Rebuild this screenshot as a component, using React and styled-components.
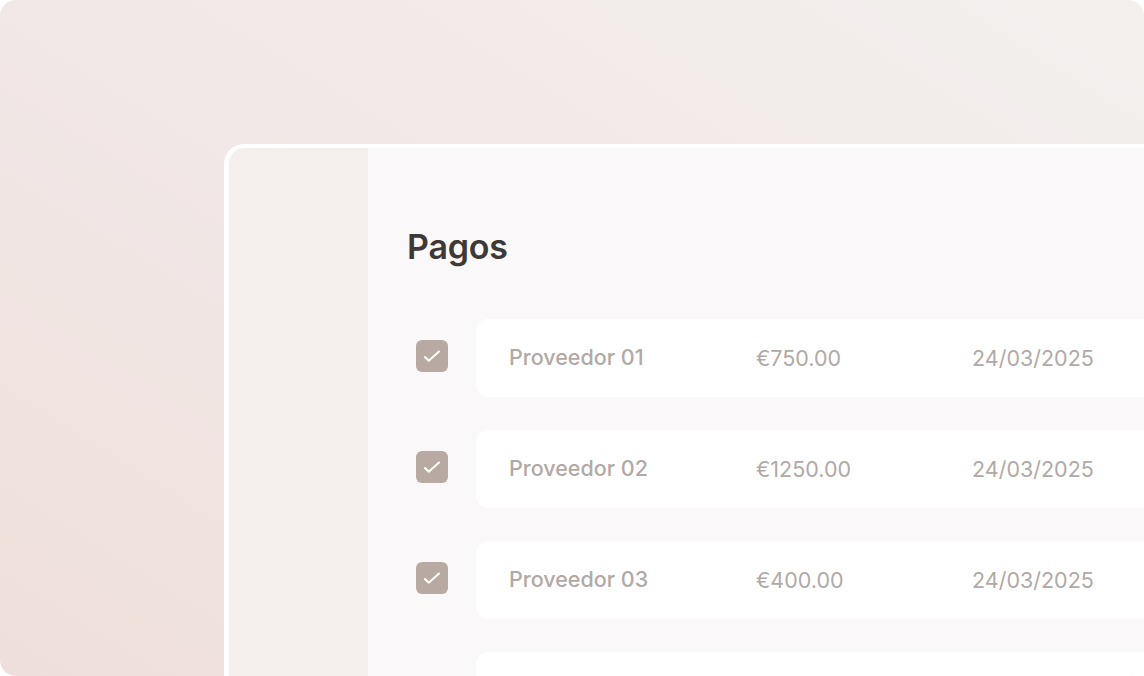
import React from 'react'
import styled, { createGlobalStyle } from 'styled-components'

const payments = [
  { name: 'Proveedor 01', amount: '€750.00', date: '24/03/2025' },
  { name: 'Proveedor 02', amount: '€1250.00', date: '24/03/2025' },
  { name: 'Proveedor 03', amount: '€400.00', date: '24/03/2025' },
  { name: '', amount: '', date: '' },
]

const Check = () => (
  <svg width="32" height="32" viewBox="0 0 32 32" fill="none">
    <path d="M9 17 12.8 20.8 23 11.5" stroke="#fff" strokeWidth="2" strokeLinecap="round" strokeLinejoin="round" />
  </svg>
)

const App = () => {
  return (
    <>
      <GlobalStyle />
      <Frame>
        <Window>
          <Sidebar />
          <Main>
            <Title>Pagos</Title>
            <List>
              {payments.map((p, i) => (
                <Row key={i}>
                  <Checkbox $hidden={!p.name}>{p.name && <Check />}</Checkbox>
                  <Card>
                    <Name>{p.name}</Name>
                    <Amount>{p.amount}</Amount>
                    <DateCell>{p.date}</DateCell>
                  </Card>
                </Row>
              ))}
            </List>
          </Main>
        </Window>
      </Frame>
    </>
  )
}

const GlobalStyle = createGlobalStyle`
  html, body {
    margin: 0;
    padding: 0;
    background: #ffffff;
    font-family: Inter, 'Noto Sans', sans-serif;
  }
`

const Frame = styled.div`
  width: 1144px;
  height: 676px;
  border-radius: 16px;
  overflow: hidden;
  box-sizing: border-box;
  padding: 144px 0 0 224px;
  background: linear-gradient(32deg, #efdfda 0%, #f1e7e6 45%, #f3f0ee 100%);
`

const Window = styled.div`
  display: flex;
  width: 1000px;
  height: 620px;
  border: 5px solid #ffffff;
  border-width: 4px 0 0 5px;
  border-radius: 20px 0 0 0;
  overflow: hidden;
  background: #faf8f8;
`

const Sidebar = styled.div`
  width: 139px;
  flex-shrink: 0;
  background: #f4efec;
`

const Main = styled.div`
  flex: 1;
  padding: 79px 0 0 39px;
`

const Title = styled.h1`
  margin: 0;
  font-size: 34px;
  line-height: 40px;
  font-weight: 600;
  color: #3e3936;
  letter-spacing: -0.2px;
`

const List = styled.div`
  display: flex;
  flex-direction: column;
  gap: 33px;
  margin-top: 52px;
  padding-left: 9px;
`

const Row = styled.div`
  display: flex;
  align-items: center;
  gap: 28px;
`

const Checkbox = styled.div`
  width: 32px;
  height: 32px;
  flex-shrink: 0;
  margin-bottom: 4px;
  border-radius: 6px;
  background: ${p => (p.$hidden ? 'transparent' : '#b8aaa3')};
  display: flex;
  align-items: center;
  justify-content: center;
`

const Card = styled.div`
  flex: 1;
  height: 78px;
  border-radius: 12px 0 0 12px;
  background: #ffffff;
  display: flex;
  align-items: center;
  padding-left: 33px;
  font-size: 21.5px;
  color: #b1a9a6;
`

const Name = styled.div`
  width: 247px;
  font-weight: 500;
  margin-top: -2px;
`

const Amount = styled.div`
  width: 216px;
`

const DateCell = styled.div``

export default App
